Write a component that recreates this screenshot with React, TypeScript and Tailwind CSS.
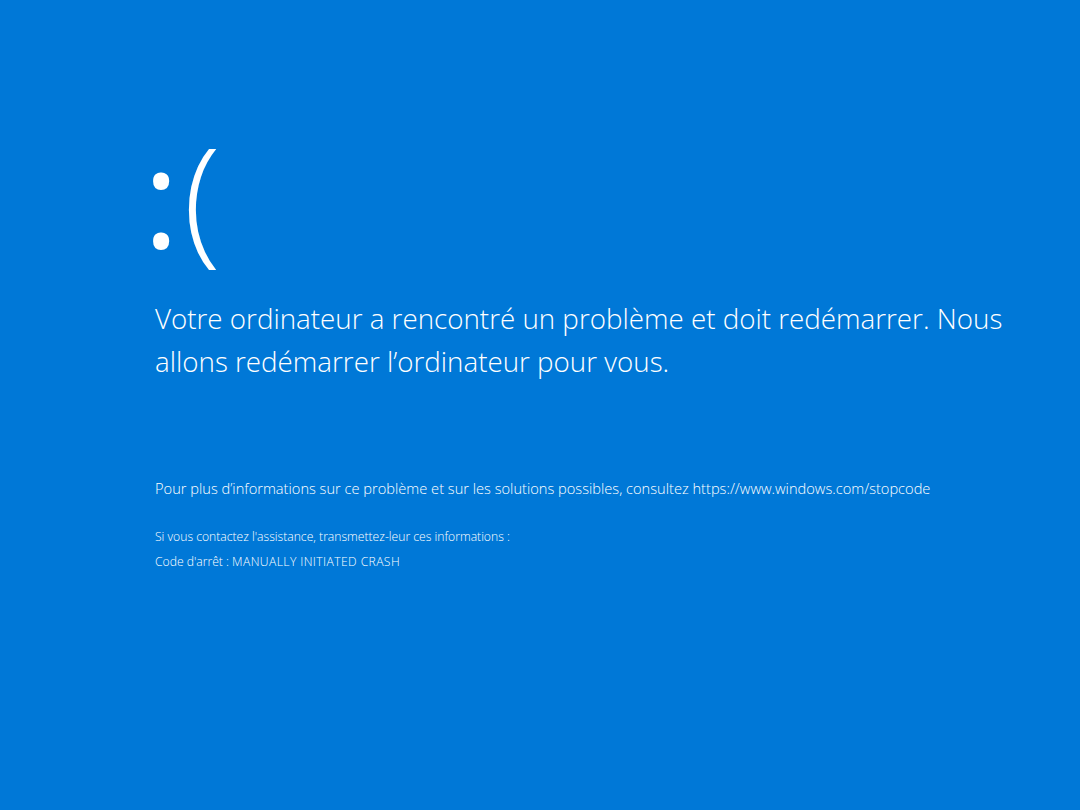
export default function App() {
  return (
    <div
      className="flex h-[810px] w-[1080px] flex-col bg-[#0078d7] pl-[155px] pt-[125px] text-white"
      style={{ fontFamily: '"Open Sans", "Noto Sans", sans-serif' }}
    >
      <div className="ml-[-12px] h-[138px] text-[138px] font-light leading-none">
        <span className="font-normal">:</span>
        <span className="ml-[4px]">(</span>
      </div>

      <p className="mt-[34px] w-[880px] text-[27.75px] font-light leading-[43px]">
        Votre ordinateur a rencontré un problème et doit redémarrer. Nous allons redémarrer
        l’ordinateur pour vous.
      </p>

      <p className="mt-[95px] text-[14.63px] font-light leading-[20px]">
        Pour plus d’informations sur ce problème et sur les solutions possibles, consultez
        https://www.windows.com/stopcode
      </p>

      <p className="mt-[30px] text-[12.15px] font-light leading-[18px]">
        Si vous contactez l'assistance, transmettez-leur ces informations :
      </p>
      <p className="mt-[7px] text-[12.15px] font-light leading-[18px]">
        Code d'arrêt : <span className="tracking-[0.4px]">MANUALLY INITIATED CRASH</span>
      </p>
    </div>
  );
}
